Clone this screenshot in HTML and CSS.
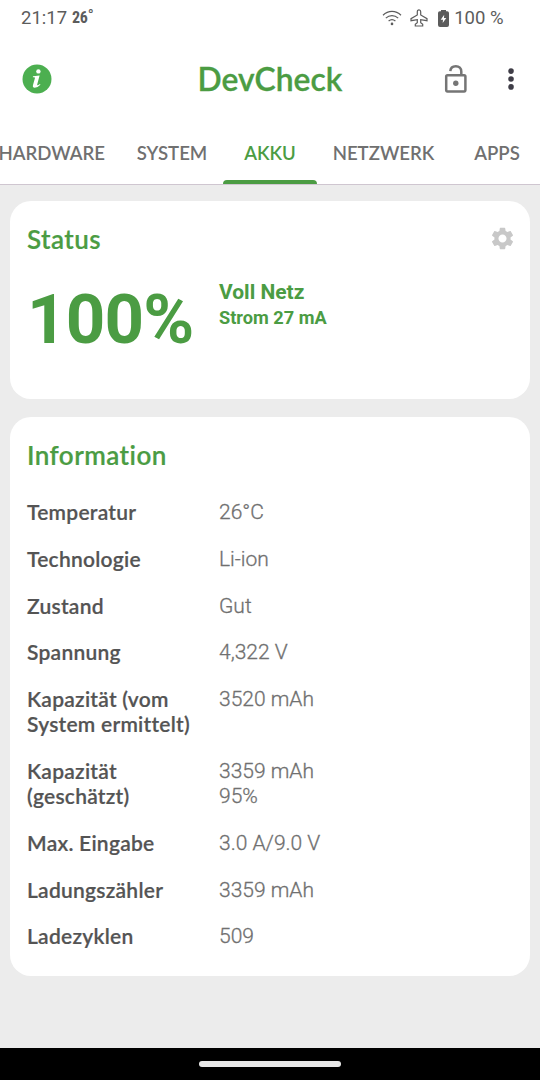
FILE: index.html
```html
<!DOCTYPE html>
<html lang="de">
<head>
  <meta charset="UTF-8">
  <meta name="viewport" content="width=device-width, initial-scale=1.0">
  <title>DevCheck</title>
  <link rel="stylesheet" href="styles.css">
</head>
<body>
  <div class="statusbar">
    <span class="clock">21:17</span>
    <span class="temp">26<span class="degree">°</span></span>
    <svg class="icon-wifi" width="20" height="16" viewBox="0 0 20 16">
      <path d="M1 5.2C6.200 .1 13.800 .1 19 5.200M3.800 8.100C7.400 4.700 12.600 4.700 16.200 8.100M6.600 11C8.700 9.200 11.300 9.200 13.400 11"/>
      <circle cx="10" cy="13.900" r="1.300"/>
    </svg>
    <svg class="icon-plane" width="18" height="18" viewBox="0 0 18 18">
      <path d="M9 .8C7.900 .8 7.300 1.700 7.300 2.700V6L1 9.700V11.700L7.300 10.600V13.800L5.300 15.200V17H12.700V15.200L10.700 13.800V10.600L17 11.700V9.700L10.700 6V2.700C10.700 1.700 10.100 .8 9 .8Z"/>
    </svg>
    <svg class="icon-battery" width="11" height="17" viewBox="0 0 11 17">
      <path class="cell" d="M3 0H8V1.200H9.200Q11 1.200 11 3V15Q11 17 9 17H2Q0 17 0 15V3Q0 1.200 1.800 1.200H3Z"/>
      <path class="bolt" d="M6.200 4.800L2.700 9.800H5L4.700 13.100L8.300 8.100H6Z"/>
    </svg>
    <span class="percent">100 %</span>
  </div>

  <header class="appbar">
    <svg class="icon-info" width="30" height="30" viewBox="0 0 30 30">
      <circle class="disc" cx="15" cy="15" r="14.500"/>
      <circle class="mark" cx="16.400" cy="7.400" r="2.200"/>
      <path class="mark" d="M11 12.300L17.600 11.400L15.200 20.600Q15 21.600 15.900 21.200L18 19.900L18.400 20.700Q15.600 23.700 12.700 23.800Q10.300 23.700 11 21.100L12.900 14.300Q13.100 13.400 12.200 13.300L10.800 13.200Z"/>
    </svg>
    <h1 class="title">DevCheck</h1>
    <svg class="icon-lock" width="24" height="30" viewBox="0 0 24 30">
      <rect x="2.200" y="11.200" width="19.200" height="16.200" rx="1.300"/>
      <path d="M6.300 7.200C6.500 4 8.700 2.200 11.800 2.200C15.200 2.200 17.300 4.400 17.300 7.500V11"/>
      <circle cx="11.800" cy="19.300" r="2.700"/>
    </svg>
    <svg class="icon-more" width="8" height="24" viewBox="0 0 8 24">
      <circle cx="4" cy="4.100" r="2.800"/>
      <circle cx="4" cy="12" r="2.800"/>
      <circle cx="4" cy="19.900" r="2.800"/>
    </svg>
  </header>

  <nav class="tabs">
    <div class="tab tab-hardware">HARDWARE</div>
    <div class="tab tab-system">SYSTEM</div>
    <div class="tab tab-akku active">AKKU</div>
    <div class="tab tab-netzwerk">NETZWERK</div>
    <div class="tab tab-apps">APPS</div>
  </nav>

  <main class="content">
    <section class="card card-status">
      <div class="card-head">
        <h2>Status</h2>
        <svg class="icon-gear" width="27" height="27" viewBox="0 0 24 24">
          <path d="M19.140 12.940c.04-.3.060-.61.060-.94 0-.32-.02-.64-.07-.94l2.030-1.580c.18-.14.230-.41.120-.61l-1.920-3.320c-.12-.22-.37-.29-.59-.22l-2.390.96c-.5-.38-1.030-.7-1.620-.94l-.36-2.540c-.04-.24-.24-.41-.48-.41h-3.840c-.24 0-.43.170-.47.410l-.36 2.540c-.59.240-1.130.570-1.620.940l-2.390-.96c-.22-.08-.47 0-.59.220L2.740 8.870c-.12.210-.08.470.120.610l2.030 1.580c-.05.300-.09.630-.09.940s.02.640.070.940l-2.030 1.580c-.18.140-.23.410-.12.610l1.920 3.320c.12.220.370.290.590.220l2.390-.96c.5.380 1.030.700 1.620.940l.36 2.540c.05.240.240.410.480.410h3.840c.24 0 .44-.17.470-.41l.36-2.540c.59-.24 1.130-.56 1.620-.94l2.390.960c.22.080.470 0 .59-.22l1.920-3.320c.12-.22.070-.47-.12-.61l-2.010-1.580zM12 15.600c-1.980 0-3.600-1.620-3.600-3.600s1.620-3.600 3.600-3.600 3.600 1.620 3.600 3.600-1.620 3.600-3.600 3.600z"/>
        </svg>
      </div>
      <div class="level">
        <div class="level-value">100%</div>
        <div class="level-info">
          <div class="state">Voll Netz</div>
          <div class="current">Strom 27 mA</div>
        </div>
      </div>
    </section>

    <section class="card card-info">
      <h2>Information</h2>
      <dl class="list">
        <dt>Temperatur</dt>
        <dd>26°C</dd>
        <dt>Technologie</dt>
        <dd>Li-ion</dd>
        <dt>Zustand</dt>
        <dd>Gut</dd>
        <dt>Spannung</dt>
        <dd>4,322 V</dd>
        <dt>Kapazität (vom<br>System ermittelt)</dt>
        <dd>3520 mAh</dd>
        <dt>Kapazität<br>(geschätzt)</dt>
        <dd>3359 mAh<br>95%</dd>
        <dt>Max. Eingabe</dt>
        <dd>3.0 A/9.0 V</dd>
        <dt>Ladungszähler</dt>
        <dd>3359 mAh</dd>
        <dt>Ladezyklen</dt>
        <dd>509</dd>
      </dl>
    </section>
  </main>

  <footer class="navbar">
    <div class="handle"></div>
  </footer>
</body>
</html>
```
FILE: styles.css
```css
* {
  box-sizing: border-box;
}
:root {
  --green: #4b9c43;
  --gray: #707070;
  --label: #545454;
}
body {
  display: flex;
  flex-direction: column;
  width: 540px;
  height: 1080px;
  margin: 0;
  overflow: hidden;
  background-color: #fff;
  font-family: Roboto, sans-serif;
  font-variant-ligatures: none;
}
h1, h2, dl, dd {
  margin: 0;
}
svg {
  display: block;
  flex: none;
}

/* status bar */
.statusbar {
  display: flex;
  align-items: center;
  height: 36px;
  padding: 0 36.5px 0 21px;
  color: #5c5c5c;
  font-size: 18.5px;
  line-height: 36px;
  white-space: nowrap;
}
.temp {
  display: flex;
  margin-left: 5px;
  font-family: "Roboto Condensed", Roboto, sans-serif;
  font-size: 16px;
  font-weight: 700;
  letter-spacing: -.3px;
}
.degree {
  margin-top: -2px;
  font-weight: 400;
}
.icon-wifi {
  margin-left: auto;
}
.icon-wifi path,
.icon-plane path {
  fill: none;
  stroke: #5c5c5c;
  stroke-width: 1.2;
}
.icon-wifi circle,
.cell {
  fill: #5c5c5c;
}
.icon-plane {
  margin-left: 8px;
}
.icon-battery {
  margin-left: 10px;
}
.bolt {
  fill: #fff;
}
.percent {
  margin-left: 5px;
}

/* app bar */
.appbar {
  display: flex;
  align-items: center;
  height: 86px;
  padding: 0 25px 0 22px;
}
.icon-info {
  margin-left: -.5px;
}
.disc {
  fill: #4caf50;
}
.mark {
  fill: #fff;
}
.title {
  margin-left: 146px;
  color: var(--green);
  font-family: Lato, sans-serif;
  font-size: 31.8px;
  font-weight: 600;
  line-height: 40px;
  -webkit-text-stroke: .3px var(--green);
}
.icon-lock {
  margin-top: -1px;
  margin-left: auto;
  margin-right: 39px;
  fill: none;
  stroke: #757575;
  stroke-width: 2.5;
}
.icon-lock circle {
  fill: #757575;
  stroke: none;
}
.icon-more {
  fill: #3f3d47;
}

/* tabs */
.tabs {
  display: flex;
  height: 63px;
  border-bottom: 1px solid #cfc6d0;
  color: var(--gray);
  font-family: Lato, sans-serif;
  font-size: 18.6px;
  font-weight: 600;
  line-height: 62px;
  text-align: center;
  white-space: nowrap;
}
.tab {
  flex: none;
}
.tab-hardware {
  width: 121px;
  padding-right: 16px;
  direction: rtl;
  text-align: right;
  text-align: -webkit-right;
}
.tab-system {
  width: 102px;
}
.tab-akku {
  width: 94px;
}
.tab-netzwerk {
  width: 133px;
}
.tab-apps {
  width: 94px;
}
.tab.active {
  color: var(--green);
}
.tab.active::after {
  content: "";
  display: block;
  height: 4.5px;
  margin-top: -4.5px;
  border-radius: 4px 4px 0 0;
  background-color: var(--green);
}

/* cards */
.content {
  flex: 1;
  padding: 16px 10px 0;
  background-color: #ececec;
}
.card {
  padding: 0 17px;
  border-radius: 21px;
  background-color: #fff;
}
.card h2 {
  color: var(--green);
  font-family: Lato, sans-serif;
  font-size: 26px;
  font-weight: 600;
  letter-spacing: .45px;
  line-height: 32px;
  -webkit-text-stroke: .2px var(--green);
}
.card-status {
  height: 197.5px;
  margin-bottom: 18.5px;
  padding-top: 22px;
}
.card-head {
  display: flex;
  justify-content: space-between;
}
.icon-gear {
  margin-top: 2px;
  margin-right: -2.5px;
  fill: #c8c8c8;
}
.level {
  display: flex;
  color: var(--green);
  font-weight: 700;
}
.level-value {
  width: 192px;
  padding-top: 24px;
  font-size: 69px;
  letter-spacing: -.8px;
  line-height: 82px;
}
.state {
  margin-top: 23px;
  font-size: 21px;
  line-height: 28px;
}
.current {
  font-size: 18.2px;
  line-height: 24px;
}
.card-info {
  height: 559px;
  padding-top: 22px;
}

/* label and value rows */
.list {
  display: grid;
  grid-template-columns: 192px 1fr;
  row-gap: 21.7px;
  margin-top: 28px;
  font-size: 21px;
  line-height: 25.1px;
}
.list dt {
  color: var(--label);
  font-family: Lato, sans-serif;
  font-weight: 600;
  letter-spacing: .25px;
  white-space: nowrap;
  -webkit-text-stroke: .2px var(--label);
}
.list dd {
  padding-top: 1px;
  margin-bottom: -1px;
  color: var(--gray);
  font-weight: 300;
  -webkit-text-stroke: .3px var(--gray);
}

/* gesture bar */
.navbar {
  display: flex;
  justify-content: center;
  height: 32px;
  padding-top: 13px;
  background-color: #000;
}
.handle {
  width: 142px;
  height: 6px;
  border-radius: 3px;
  background-color: #e8e8e8;
}
```
